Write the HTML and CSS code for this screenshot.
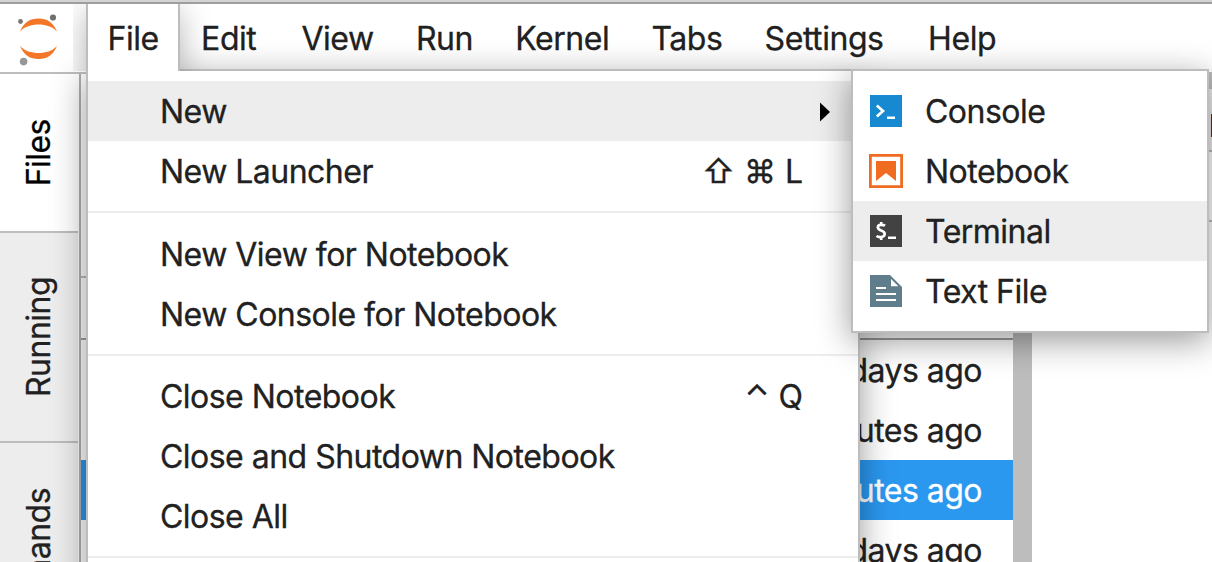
FILE: index.html
```html
<!DOCTYPE html>
<html lang="en">
<head>
<meta charset="utf-8">
<title>JupyterLab</title>
<link rel="stylesheet" href="styles.css">
</head>
<body>
<div class="app">
  <header class="topbar">
    <div class="logo">
      <svg width="73" height="68" viewBox="0 4 73 68">
        <path d="M20 31.5C24 22 30 18.5 38.5 18.5S53 22 57 31.5C52 26.500 46 24.500 38.500 24.500S25 26.500 20 31.500Z" fill="#f37726"/>
        <path d="M20 46C24 55.500 30 59 38.500 59S53 55.500 57 46C52 51 46 53 38.500 53S25 51 20 46Z" fill="#f37726"/>
        <circle cx="20.500" cy="21.500" r="2.400" fill="#767677"/>
        <circle cx="53" cy="17.500" r="3.100" fill="#6f7070"/>
        <circle cx="23.600" cy="61.600" r="3.800" fill="#989798"/>
      </svg>
    </div>
    <nav class="menubar">
      <span class="tab active">File</span>
      <span class="tab edit">Edit</span>
      <span class="tab">View</span>
      <span class="tab">Run</span>
      <span class="tab">Kernel</span>
      <span class="tab">Tabs</span>
      <span class="tab settings">Settings</span>
      <span class="tab">Help</span>
    </nav>
  </header>
  <main class="workspace">
    <aside class="sidebar">
      <div class="side-tab files"><span>Files</span></div>
      <div class="side-tab running"><span>Running</span></div>
      <div class="side-tab commands"><span>Commands</span></div>
    </aside>
    <section class="browser">
      <div class="toolbar"></div>
      <div class="columns"></div>
      <div class="row">3 days ago</div>
      <div class="row">5 minutes ago</div>
      <div class="row selected">8 minutes ago</div>
      <div class="row">3 days ago</div>
    </section>
    <div class="splitter"></div>
    <section class="dock">
      <div class="dock-strip"></div>
      <div class="dock-tabs"><i class="stem"></i></div>
      <div class="dock-tools"></div>
    </section>
  </main>

  <div class="menu file-menu">
    <div class="item highlight"><span>New</span><svg class="arrow" width="10" height="20" viewBox="0 0 10 20"><path d="M0 0.500L10 10L0 19.500Z"/></svg></div>
    <div class="item"><span>New Launcher</span><span class="keys">⇧ ⌘ L</span></div>
    <div class="sep first"></div>
    <div class="item"><span>New View for Notebook</span></div>
    <div class="item"><span>New Console for Notebook</span></div>
    <div class="sep"></div>
    <div class="item"><span>Close Notebook</span><span class="keys">⌃ Q</span></div>
    <div class="item"><span>Close and Shutdown Notebook</span></div>
    <div class="item"><span>Close All</span></div>
    <div class="sep"></div>
  </div>

  <div class="menu submenu">
    <div class="item">
      <svg class="icon" viewBox="0 0 32 32"><path fill="#1789d0" d="M0 0h32v32H0z"/><path d="M6.800 10.500L13 16L6.800 21.500" fill="none" stroke="#fff" stroke-width="2.700"/><path fill="#fff" d="M17 21.500h8v2.500h-8z"/></svg>
      <span>Console</span>
    </div>
    <div class="item">
      <svg class="icon" viewBox="0 0 32 32"><path fill="none" stroke="#ef6c20" stroke-width="2.800" d="M.4.400h31.200v31.200H.4z"/><path fill="#ef6c20" d="M6 6h20v20l-10-8L6 26z"/></svg>
      <span>Notebook</span>
    </div>
    <div class="item highlight">
      <svg class="icon" viewBox="0 0 32 32"><path fill="#424242" d="M0 0h32v32H0z"/><path d="M15 10.800C13.500 9.600 8 8.900 7.800 12.300C7.800 16.300 14.700 14.800 14.700 19C14.500 22.800 8.500 22.500 6.500 21M11.200 7v3M11.200 22v3" fill="none" stroke="#fff" stroke-width="2.700"/><path fill="#fff" d="M18 21.500h8v2.500h-8z"/></svg>
      <span>Terminal</span>
    </div>
    <div class="item">
      <svg class="icon" viewBox="0 0 32 32"><path fill="#607d8b" d="M0 0h20l12 12v20H0z"/><path fill="#fff" d="M21 4v7.300h7.300zM6 12h10v2H6zM6 18h20v2H6zM6 24h20v2H6z"/></svg>
      <span>Text File</span>
    </div>
  </div>
</div>
</body>
</html>
```
FILE: styles.css
```css
* { box-sizing: border-box; }
body {
  margin: 0;
  font: 32px/60px Inter, "Open Sans", sans-serif;
  letter-spacing: -.52px;
  -webkit-text-stroke: .3px;
  color: #212121;
  background: #fff;
}
.app {
  position: relative;
  width: 1212px;
  height: 562px;
  overflow: hidden;
  display: flex;
  flex-direction: column;
}
.topbar {
  display: flex;
  flex: none;
  height: 74px;
  border-top: 2px solid #d3d3d3;
  border-bottom: 2px solid #bdbdbd;
}
.logo, .menubar { border-top: 2px solid #9e9e9e; }
.logo { width: 86px; }
.logo svg { display: block; }
.menubar { display: flex; flex: 1; letter-spacing: -.45px; }
.tab {
  height: 67px;
  line-height: 70px;
  padding: 0 21.100px;
}
.edit { padding-right: 24px; }
.settings { padding-right: 23.500px; }
.tab.active {
  position: relative;
  z-index: 3;
  width: 94px;
  padding: 0 0 0 19.500px;
  background: #fff;
  border: solid #bdbdbd;
  border-width: 0 2px;
  box-shadow: 0 8px 32px rgba(0, 0, 0, .3);
  clip-path: inset(0 -40px 0 -13px);
}
.workspace { display: flex; flex: 1; min-height: 0; }
.sidebar {
  width: 81px;
  border-right: 2px solid #b0b0b0;
  background: #fff;
  display: flex;
  flex-direction: column;
}
.side-tab {
  flex: none;
  width: 78px;
  display: flex;
  justify-content: center;
  align-items: center;
  background: #ededed;
  border-bottom: 2px solid #bdbdbd;
}
.side-tab span {
  writing-mode: vertical-rl;
  transform: rotate(180deg);
  line-height: 78px;
}
.files { height: 159px; background: #fff; color: #000; }
.running { height: 210px; }
.commands { height: 259px; }
.browser { width: 932px; }
.toolbar { height: 204px; border-bottom: 2px solid #bdbdbd; }
.columns { height: 62px; border-bottom: 2px solid #9e9e9e; }
.row {
  height: 60px;
  padding: 1px 31px 0 0;
  text-align: right;
  white-space: nowrap;
}
.selected { background: #2b98f0; color: #fff; }
.splitter { width: 19px; background: #bdbdbd; }
.dock { flex: 1; }
.dock-strip { height: 15px; background: #bdbdbd; }
.dock-tabs {
  height: 63px;
  border-bottom: 2px solid #bdbdbd;
  background: #ededed;
  display: flex;
  justify-content: flex-end;
  padding-top: 25px;
}
.stem { width: 1px; height: 23px; background: #5b3020; }
.dock-tools { height: 70px; border-bottom: 2px solid #bdbdbd; }
.menu {
  position: absolute;
  top: 69px;
  background: #fff;
  border: 2px solid #bdbdbd;
  padding: 10px 0;
  box-shadow: 0 8px 32px rgba(0, 0, 0, .4);
}
.file-menu { left: 86px; width: 774px; height: 520px; z-index: 2; }
.submenu { left: 851px; width: 358px; height: 264px; z-index: 4; }
.item {
  height: 60px;
  display: flex;
  align-items: center;
  justify-content: space-between;
  padding: 2px 55px 0 72px;
  white-space: nowrap;
}
.keys { letter-spacing: 0; }
.highlight { background: #ededed; }
.arrow { margin-right: -27px; }
.sep { height: 22px; padding-top: 10px; }
.sep::before { content: ""; display: block; height: 2px; background: #ededed; }
.sep.first { height: 23px; }
.submenu .item { justify-content: flex-start; gap: 23px; padding: 0 0 0 17px; }
.submenu .item span { padding-top: 2px; }
.icon { width: 32px; height: 32px; overflow: visible; }
```
